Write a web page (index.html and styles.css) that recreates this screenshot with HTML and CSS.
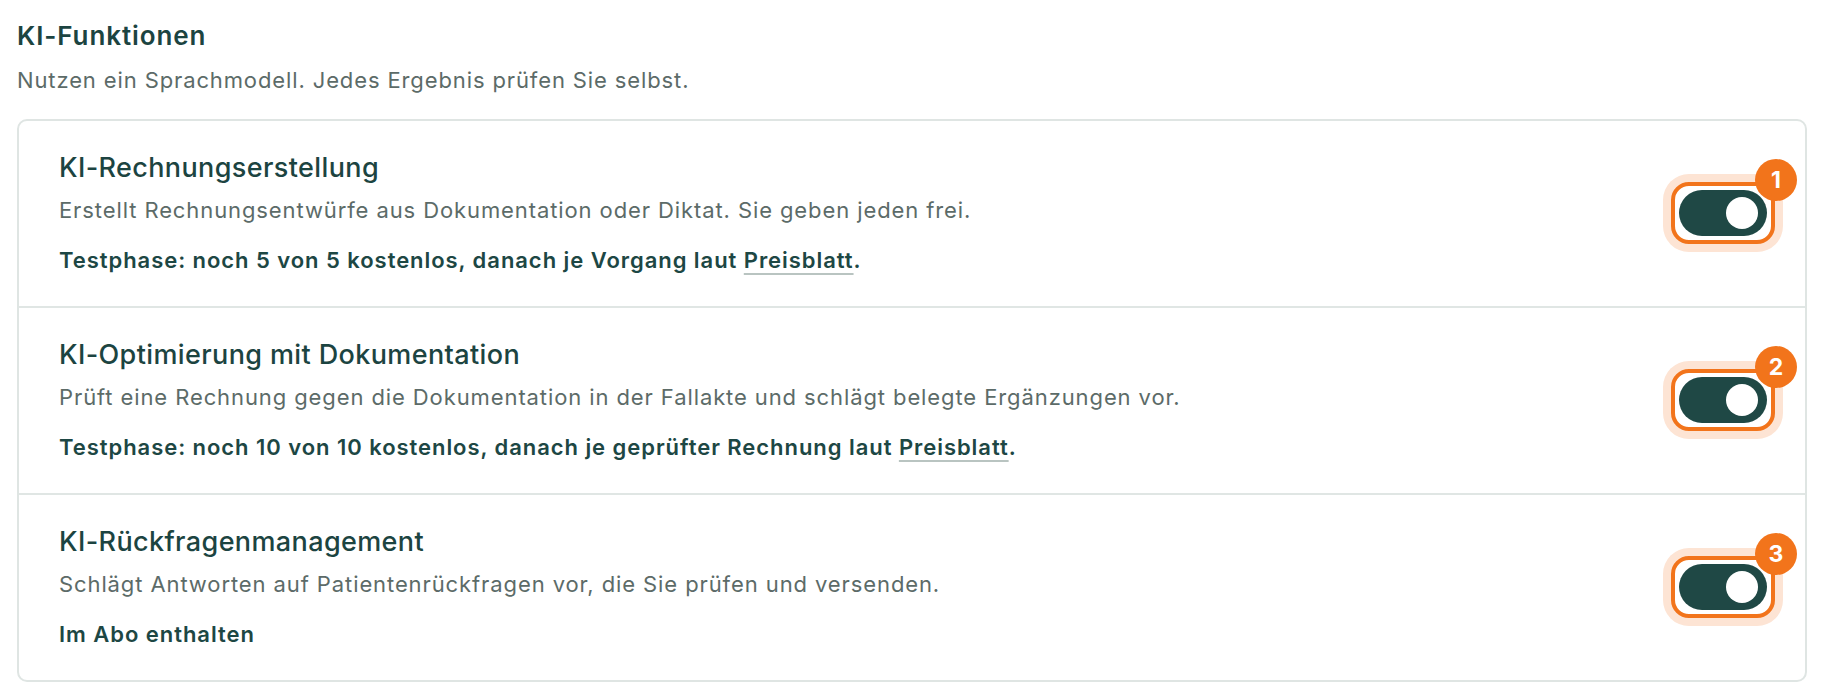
FILE: index.html
```html
<!DOCTYPE html>
<html lang="de">
<head>
<meta charset="utf-8">
<title>KI-Funktionen</title>
<link rel="stylesheet" href="styles.css">
</head>
<body>
<main class="page">
  <h2 class="section-title">KI-Funktionen</h2>
  <p class="section-sub">Nutzen ein Sprachmodell. Jedes Ergebnis prüfen Sie selbst.</p>
  <div class="card">
    <div class="row">
      <div class="info">
        <h3 class="row-title">KI-Rechnungserstellung</h3>
        <p class="row-desc">Erstellt Rechnungsentwürfe aus Dokumentation oder Diktat. Sie geben jeden frei.</p>
        <p class="row-note">Testphase: noch 5 von 5 kostenlos, danach je Vorgang laut <a class="link" href="#">Preisblatt</a>.</p>
      </div>
      <div class="toggle-wrap">
        <button class="toggle" type="button" aria-pressed="true"><span class="knob"></span></button>
        <span class="badge">1</span>
      </div>
    </div>
    <div class="row">
      <div class="info">
        <h3 class="row-title">KI-Optimierung mit Dokumentation</h3>
        <p class="row-desc">Prüft eine Rechnung gegen die Dokumentation in der Fallakte und schlägt belegte Ergänzungen vor.</p>
        <p class="row-note">Testphase: noch 10 von 10 kostenlos, danach je geprüfter Rechnung laut <a class="link" href="#">Preisblatt</a>.</p>
      </div>
      <div class="toggle-wrap">
        <button class="toggle" type="button" aria-pressed="true"><span class="knob"></span></button>
        <span class="badge">2</span>
      </div>
    </div>
    <div class="row">
      <div class="info">
        <h3 class="row-title">KI-Rückfragenmanagement</h3>
        <p class="row-desc">Schlägt Antworten auf Patientenrückfragen vor, die Sie prüfen und versenden.</p>
        <p class="row-note">Im Abo enthalten</p>
      </div>
      <div class="toggle-wrap">
        <button class="toggle" type="button" aria-pressed="true"><span class="knob"></span></button>
        <span class="badge">3</span>
      </div>
    </div>
  </div>
</main>
</body>
</html>
```
FILE: styles.css
```css
html, body {
  margin: 0;
  padding: 0;
  background: #ffffff;
}

body {
  font-family: Inter, "Noto Sans", "Liberation Sans", sans-serif;
  color: #1c4441;
}

.page {
  padding: 20px 17px 0 17px;
}

.section-title {
  margin: 0;
  font-size: 26px;
  line-height: 32px;
  font-weight: 600;
  letter-spacing: 0.9px;
  color: #1c4441;
}

.section-sub {
  margin: 13px 0 0 0;
  font-size: 22px;
  line-height: 30px;
  letter-spacing: 0.88px;
  color: #5c6b68;
}

.card {
  margin-top: 24px;
  border: 2px solid #dfe5e3;
  border-radius: 10px;
  background: #ffffff;
}

.row {
  display: flex;
  align-items: center;
  justify-content: space-between;
  padding: 30px 30px 31px 40px;
  border-bottom: 2px solid #e0e6e4;
}

.row:last-child {
  border-bottom: 0;
}

.info {
  display: flex;
  flex-direction: column;
}

.row-title {
  margin: 0;
  font-size: 27px;
  line-height: 34px;
  font-weight: 500;
  letter-spacing: 0.38px;
  color: #1c4441;
}

.row-desc {
  margin: 10px 0 0 0;
  font-size: 22px;
  line-height: 30px;
  letter-spacing: 0.9px;
  color: #5c6b68;
}

.row-note {
  margin: 20px 0 0 0;
  font-size: 22px;
  line-height: 30px;
  font-weight: 600;
  letter-spacing: 0.95px;
  color: #1d4744;
}

.link {
  color: #1d4744;
  text-decoration: underline;
  text-decoration-color: #b9c4c1;
  text-decoration-thickness: 2px;
  text-underline-offset: 5px;
}

.toggle-wrap {
  position: relative;
  display: flex;
  padding: 4px;
  border: 4px solid #f2741b;
  border-radius: 18px;
  box-shadow: 0 0 0 8px #fde4d4;
  background: #ffffff;
}

.toggle {
  display: flex;
  align-items: center;
  justify-content: flex-end;
  width: 88px;
  height: 46px;
  padding: 0 9px;
  border: 0;
  border-radius: 23px;
  background: #1f4845;
  cursor: pointer;
}

.knob {
  display: block;
  width: 32px;
  height: 32px;
  border-radius: 50%;
  background: #ffffff;
}

.badge {
  position: absolute;
  top: -27px;
  right: -26px;
  display: flex;
  align-items: center;
  justify-content: center;
  width: 42px;
  height: 42px;
  border-radius: 50%;
  background: #f2741b;
  color: #ffffff;
  font-size: 23px;
  font-weight: 700;
}
```
